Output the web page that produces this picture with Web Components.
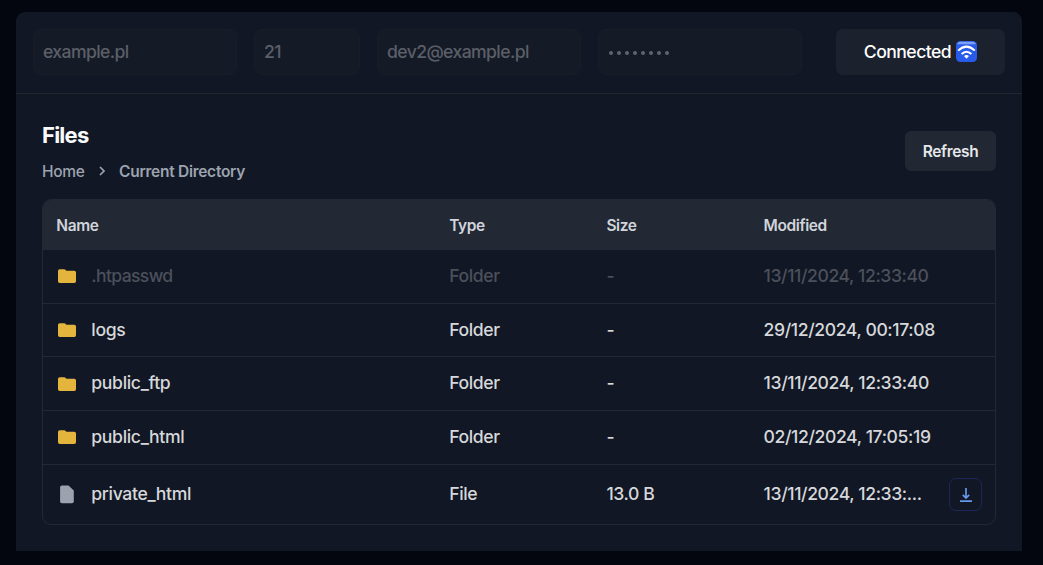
<!DOCTYPE html>
<html lang="en">
<head>
<meta charset="utf-8">
<title>Files</title>
<style>
html{height:100%;background:#03050f}
body{margin:0;padding:12px 21px 14px 16px;height:565px;box-sizing:border-box;overflow:hidden;font-family:Inter,"Liberation Sans",sans-serif;-webkit-font-smoothing:antialiased}
</style>
</head>
<body>
<ftp-client></ftp-client>
<script>
const define = (name, css, html) => customElements.define(name, class extends HTMLElement {
  constructor() {
    super();
    this.attachShadow({mode: 'open'}).innerHTML = `<style>*{box-sizing:border-box}${css}</style>${typeof html === 'function' ? html(this) : html}`;
  }
});

define('connection-field', `
:host{display:flex;align-items:center;box-sizing:border-box;height:46px;padding:0 9.5px 2px;border:1px solid #1a1c29;border-radius:7px;background:#151a27;color:#5b5f68;font-size:17.6px;font-weight:450;letter-spacing:-.6px}
`, '<slot></slot>');

define('password-dots', `
:host{display:flex;gap:4px;padding:3px 0 0 1px}
i{width:4px;height:4px;border-radius:50%;background:#60646d}
`, '<i></i>'.repeat(8));

define('wifi-badge', `
:host{display:block;width:21px;height:21px}svg{display:block}
`, `<svg width="21" height="21" viewBox="0 0 21 21" fill="none"><rect width="21" height="21" rx="4.2" fill="#285bea"/><path d="M1 3.2Q1.6.7 4.2.7h12.600Q19.400.7 20 3.200z" fill="#7ba0f5"/><path d="M2.200 9.600Q10.500 1.600 18.800 9.600M5.600 13Q10.500 8.400 15.400 13" stroke="#fff" stroke-width="2"/><path d="M10.500 17.700L8 15.100Q10.500 13 13 15.100Z" fill="#fff"/></svg>`);

define('connection-bar', `
:host{display:flex;align-items:flex-start;box-sizing:border-box;height:82px;padding:17px 17px 0 16.500px;gap:17px;border-bottom:1px solid #23262c}
.w{width:204px}.n{width:106px}
.status{margin-left:auto;display:flex;align-items:center;justify-content:center;gap:5px;width:169px;height:46px;padding-bottom:1px;border-radius:7px;background:#1b212d;color:#fff;font-size:17.600px;font-weight:450;letter-spacing:-.55px}
`, `<connection-field class="w">example.pl</connection-field><connection-field class="n">21</connection-field><connection-field class="w">dev2@example.pl</connection-field><connection-field class="w"><password-dots></password-dots></connection-field><div class="status"><span>Connected</span><wifi-badge></wifi-badge></div>`);

define('files-header', `
:host{display:flex;justify-content:space-between;height:79px}
h2{margin:0;font-size:22px;line-height:30px;font-weight:650;color:#f9fafb;letter-spacing:-.75px}
nav{display:flex;align-items:center;margin-top:9px;height:24px;color:#9ca3af;font-size:15.500px;letter-spacing:-.3px;font-weight:450}
svg{margin:0 14px 0 14.500px}b{font-weight:600;letter-spacing:-.27px}
button{margin:11px 0 0;width:91px;height:40px;padding:0;border:0;border-radius:6px;background:#222833;color:#e5e7eb;font:600 15.500px Inter,sans-serif;letter-spacing:-.35px}
`, `<div><h2>Files</h2><nav><span>Home</span><svg width="6" height="10" viewBox="0 0 6 10" fill="none" stroke="#9ca3af" stroke-width="1.700"><path d="M1 1l4 4-4 4"/></svg><b>Current Directory</b></nav></div><button>Refresh</button>`);

const icons = {
  Folder: '<svg width="20" height="20" viewBox="0 0 20 20"><path d="M1 5q0-1.700 1.700-1.700h4.600q.8 0 1.300.6l.9.9h7.800Q19 4.800 19 6.500v8.700q0 1.700-1.700 1.700H2.700Q1 16.900 1 15.200z" fill="#e3b53c"/></svg>',
  File: '<svg width="20" height="20" viewBox="0 0 20 20"><path d="M3.100 2.300Q3.100.5 4.900.5h6.600L16.800 5.500v11q0 1.800-1.800 1.800H4.900q-1.800 0-1.800-1.800z" fill="#9ca3af"/></svg>'
};
const download = '<button aria-label="Download"><svg width="12" height="14" viewBox="0 0 12 14" fill="none" stroke="#6499ee" stroke-width="1.700"><path d="M6 0v9.500M2.800 6.800L6 10l3.200-3.200M0 13.100h12"/></svg></button>';

define('file-row', `
:host{display:grid;grid-template-columns:repeat(12,minmax(0,1fr));column-gap:17.700px;align-items:center;box-sizing:border-box;height:53.700px;padding:0 13.300px;border-bottom:1px solid #222834;color:#d6d8db;font-size:17.600px;font-weight:450;letter-spacing:-.4px}
:host([muted]){color:#4b505b;letter-spacing:-.42px}
:host([muted]) .name span{letter-spacing:-.65px}
:host(:last-child){height:60px;border:0}
.name{grid-column:span 5;display:flex;align-items:center;gap:14px;padding-left:1px;letter-spacing:-.33px}
.k,.s{grid-column:span 2}
span{padding-bottom:2px}
.m{grid-column:span 3;display:flex;align-items:center;justify-content:space-between}
.m span{white-space:nowrap}
svg{display:block}
button{display:grid;place-items:center;flex:none;width:33px;height:33px;padding:0 0 0 1px;border:1px solid #1b2857;border-radius:7px;background:none}
`, el => {
  const [name, kind, size, date] = el.dataset.v.split('|');
  return `<div class="name">${icons[kind]}<span>${name}</span></div><span class="k">${kind}</span><span class="s">${size}</span><div class="m"><span>${date}</span>${kind === 'File' ? download : ''}</div>`;
});

define('file-table', `
:host{display:block;box-sizing:border-box;height:326px;border:1px solid #222834;border-radius:9px;overflow:hidden}
.head{display:grid;grid-template-columns:repeat(12,minmax(0,1fr));column-gap:17.700px;align-items:center;height:50px;padding:0 13.300px;background:#222834;color:#d1d5db;font-size:15.500px;font-weight:600;letter-spacing:-.4px}
.head span{grid-column:span 2}.head span:first-child{grid-column:span 5}.head span:last-child{grid-column:span 3}
`, `<div class="head"><span>Name</span><span>Type</span><span>Size</span><span>Modified</span></div>
<div><file-row muted data-v=".htpasswd|Folder|-|13/11/2024, 12:33:40"></file-row><file-row data-v="logs|Folder|-|29/12/2024, 00:17:08"></file-row><file-row data-v="public_ftp|Folder|-|13/11/2024, 12:33:40"></file-row><file-row data-v="public_html|Folder|-|02/12/2024, 17:05:19"></file-row><file-row data-v="private_html|File|13.0 B|13/11/2024, 12:33:..."></file-row></div>`);

define('ftp-client', `
:host{display:block;height:539px;border-radius:9px 9px 0 0;background:#111724;overflow:hidden}
main{padding:26px 26px 0}
`, '<connection-bar></connection-bar><main><files-header></files-header><file-table></file-table></main>');
</script>
</body>
</html>
